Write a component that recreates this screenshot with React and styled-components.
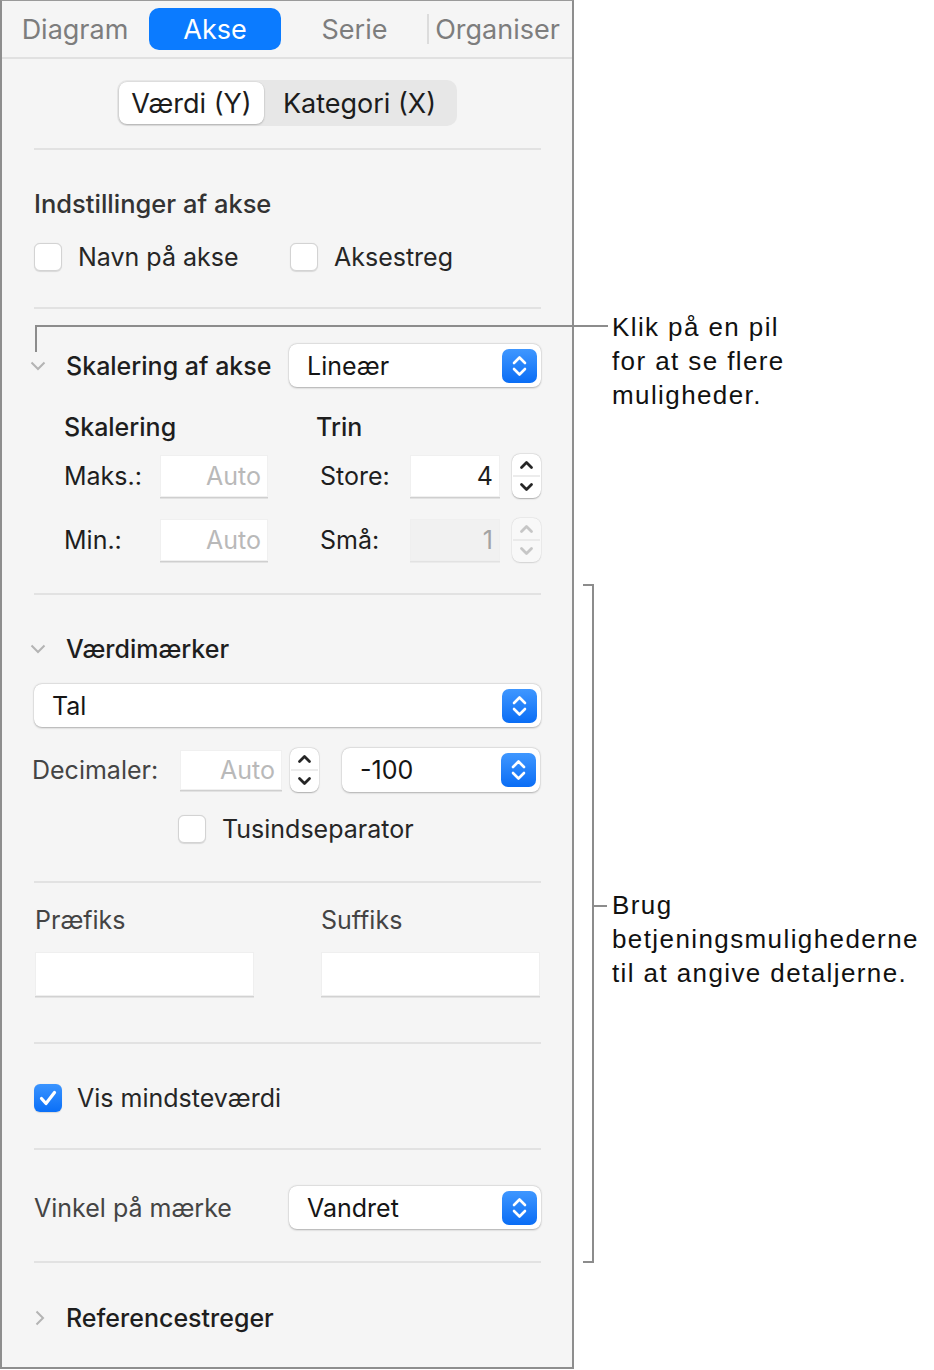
import React from "react";
import styled, { createGlobalStyle } from "styled-components";

const GlobalStyle = createGlobalStyle`
    html, body {
        margin: 0;
        padding: 0;
        background: #fff;
    }
    body {
        font-family: Inter, "Noto Sans", sans-serif;
        -webkit-font-smoothing: antialiased;
    }
    * {
        box-sizing: border-box;
    }
`;

function UpDown({ color = "#fff", w = 35, h = 34 }) {
    const cx = w / 2;
    const cy = h / 2;
    return (
        <svg width={w} height={h} viewBox={`0 0 ${w} ${h}`}>
            <path
                d={`M${cx - 5.5} ${cy - 3} L${cx} ${cy - 8.5} L${cx + 5.5} ${cy - 3}`}
                stroke={color}
                strokeWidth="2.6"
                fill="none"
                strokeLinecap="round"
                strokeLinejoin="round"
            />
            <path
                d={`M${cx - 5.5} ${cy + 3} L${cx} ${cy + 8.5} L${cx + 5.5} ${cy + 3}`}
                stroke={color}
                strokeWidth="2.6"
                fill="none"
                strokeLinecap="round"
                strokeLinejoin="round"
            />
        </svg>
    );
}

function Popup({ label, width }) {
    return (
        <PopupBox $w={width}>
            <PopupText>{label}</PopupText>
            <BlueButton>
                <UpDown />
            </BlueButton>
        </PopupBox>
    );
}

function Stepper({ disabled }) {
    const c = disabled ? "#c6c6c6" : "#262626";
    return (
        <StepperBox $disabled={disabled}>
            <svg width="29" height="44" viewBox="0 0 29 44">
                <path
                    d="M9.5 13.5 L14.5 8.5 L19.5 13.5"
                    stroke={c}
                    strokeWidth="2.8"
                    fill="none"
                    strokeLinecap="round"
                    strokeLinejoin="round"
                />
                <line x1="1" y1="22" x2="28" y2="22" stroke="#e6e6e6" strokeWidth="1.5" />
                <path
                    d="M9.5 30.5 L14.5 35.5 L19.5 30.5"
                    stroke={c}
                    strokeWidth="2.8"
                    fill="none"
                    strokeLinecap="round"
                    strokeLinejoin="round"
                />
            </svg>
        </StepperBox>
    );
}

function Check({ checked }) {
    return (
        <CheckBox $checked={checked}>
            {checked && (
                <svg width="28" height="28" viewBox="0 0 28 28">
                    <path
                        d="M7.5 14.5 L12 19.5 L20.5 8.5"
                        stroke="#fff"
                        strokeWidth="3.2"
                        fill="none"
                        strokeLinecap="round"
                        strokeLinejoin="round"
                    />
                </svg>
            )}
        </CheckBox>
    );
}

function Disclosure({ open }) {
    return (
        <Chevron $open={open}>
            {open ? (
                <svg width="16" height="10" viewBox="0 0 16 10">
                    <path d="M1.5 1.5 L8 8 L14.5 1.5" stroke="#b4b4b4" strokeWidth="2" fill="none" />
                </svg>
            ) : (
                <svg width="10" height="16" viewBox="0 0 10 16">
                    <path d="M1.5 1.5 L8 8 L1.5 14.5" stroke="#b4b4b4" strokeWidth="2" fill="none" />
                </svg>
            )}
        </Chevron>
    );
}

export default function App() {
    return (
        <>
            <GlobalStyle />
            <Page>
                <Panel>
                    <TabBar>
                        <Tab $w={134}>Diagram</Tab>
                        <Tab $w={132} $active>
                            Akse
                        </Tab>
                        <Tab $w={133}>Serie</Tab>
                        <TabDivider />
                        <Tab $w={137}>Organiser</Tab>
                    </TabBar>

                    <Segmented>
                        <Segment $active>Værdi (Y)</Segment>
                        <Segment>Kategori (X)</Segment>
                    </Segmented>

                    <Content>
                        <Divider $mt={22} />

                        <GroupTitle $mt={39}>Indstillinger af akse</GroupTitle>
                        <CheckRow $mt={23}>
                            <CheckItem $w={256}>
                                <Check />
                                <CheckLabel>Navn på akse</CheckLabel>
                            </CheckItem>
                            <CheckItem>
                                <Check />
                                <CheckLabel>Aksestreg</CheckLabel>
                            </CheckItem>
                        </CheckRow>

                        <Divider $mt={36} />

                        <HeadRow $mt={35}>
                            <HeadLeft>
                                <Disclosure open />
                                <HeadText>Skalering af akse</HeadText>
                            </HeadLeft>
                            <Popup label="Lineær" width={252} />
                        </HeadRow>

                        <ScaleGrid $mt={25}>
                            <SubTitle>Skalering</SubTitle>
                            <span />
                            <SubTitle>Trin</SubTitle>
                            <span />
                            <span />

                            <FieldLabel>Maks.:</FieldLabel>
                            <Field>Auto</Field>
                            <FieldLabel>Store:</FieldLabel>
                            <Field $value>4</Field>
                            <Stepper />

                            <FieldLabel>Min.:</FieldLabel>
                            <Field>Auto</Field>
                            <FieldLabel>Små:</FieldLabel>
                            <Field $disabled>1</Field>
                            <Stepper disabled />
                        </ScaleGrid>

                        <Divider $mt={31} />

                        <HeadRow $mt={39} $h={30}>
                            <HeadLeft>
                                <Disclosure open />
                                <HeadText>Værdimærker</HeadText>
                            </HeadLeft>
                        </HeadRow>

                        <Block $mt={20}>
                            <Popup label="Tal" width={507} />
                        </Block>

                        <DecimalRow $mt={21}>
                            <MutedLabel $w={148}>Decimaler:</MutedLabel>
                            <Field $w={102} $h={40}>
                                Auto
                            </Field>
                            <Stepper />
                            <Popup label="-100" width={198} />
                        </DecimalRow>

                        <CheckRow $mt={22} $pl={144}>
                            <CheckItem>
                                <Check />
                                <CheckLabel>Tusindseparator</CheckLabel>
                            </CheckItem>
                        </CheckRow>

                        <Divider $mt={38} />

                        <AffixGrid $mt={22}>
                            <MutedLabel>Præfiks</MutedLabel>
                            <MutedLabel>Suffiks</MutedLabel>
                            <AffixField />
                            <AffixField />
                        </AffixGrid>

                        <Divider $mt={46} />

                        <CheckRow $mt={39}>
                            <CheckItem>
                                <Check checked />
                                <CheckLabel $gap={15}>Vis mindsteværdi</CheckLabel>
                            </CheckItem>
                        </CheckRow>

                        <Divider $mt={36} />

                        <HeadRow $mt={36}>
                            <MutedLabel>Vinkel på mærke</MutedLabel>
                            <Popup label="Vandret" width={252} />
                        </HeadRow>

                        <Divider $mt={32} />

                        <HeadRow $mt={40} $h={30}>
                            <HeadLeft>
                                <Disclosure />
                                <HeadText>Referencestreger</HeadText>
                            </HeadLeft>
                        </HeadRow>
                    </Content>
                </Panel>

                <Notes>
                    <Note $mt={310}>
                        Klik på en pil
                        <br />
                        for at se flere
                        <br />
                        muligheder.
                    </Note>
                    <Note $mt={476}>
                        Brug
                        <br />
                        betjeningsmulighederne
                        <br />
                        til at angive detaljerne.
                    </Note>
                </Notes>

                <Callout />
                <Bracket />
            </Page>
        </>
    );
}

const Page = styled.div`
    position: relative;
    display: flex;
    align-items: flex-start;
    width: 934px;
    height: 1370px;
    overflow: hidden;
`;

const Panel = styled.div`
    width: 574px;
    height: 1369px;
    flex-shrink: 0;
    background: #f5f5f5;
    border: 2px solid #8e8e8e;
    border-top: 1px solid #9a9a9a;
`;

const TabBar = styled.div`
    display: flex;
    align-items: center;
    height: 58px;
    padding-left: 6px;
    gap: 7px;
    border-bottom: 2px solid #e1e1e1;
`;

const Tab = styled.div`
    width: ${(p) => p.$w}px;
    height: 42px;
    display: flex;
    align-items: center;
    justify-content: center;
    border-radius: 10px;
    font-size: 27px;
    color: ${(p) => (p.$active ? "#fff" : "#7d7d7d")};
    background: ${(p) => (p.$active ? "#0b7bff" : "transparent")};
`;

const TabDivider = styled.div`
    width: 2px;
    height: 30px;
    margin-left: -1px;
    margin-right: -7px;
    background: #dcdcdc;
`;

const Segmented = styled.div`
    display: flex;
    width: 340px;
    height: 46px;
    margin: 21px auto 0;
    padding: 2px;
    border-radius: 10px;
    background: #e7e7e7;
`;

const Segment = styled.div`
    display: flex;
    align-items: center;
    justify-content: center;
    flex: ${(p) => (p.$active ? "0 0 145px" : "1")};
    border-radius: 8px;
    font-size: 27px;
    color: #1c1c1c;
    background: ${(p) => (p.$active ? "#fff" : "transparent")};
    box-shadow: ${(p) =>
        p.$active ? "0 1px 2px rgba(0,0,0,0.22), 0 0 0 0.5px rgba(0,0,0,0.06)" : "none"};
`;

const Content = styled.div`
    padding: 0 31px 0 32px;
`;

const Divider = styled.div`
    height: 2px;
    margin-top: ${(p) => p.$mt}px;
    background: #e2e2e2;
`;

const GroupTitle = styled.div`
    margin-top: ${(p) => p.$mt}px;
    font-size: 25.5px;
    line-height: 30px;
    font-weight: 500;
    color: #333;
`;

const CheckRow = styled.div`
    display: flex;
    align-items: center;
    height: 29px;
    margin-top: ${(p) => p.$mt}px;
    padding-left: ${(p) => p.$pl || 0}px;
`;

const CheckItem = styled.div`
    display: flex;
    align-items: center;
    width: ${(p) => (p.$w ? `${p.$w}px` : "auto")};
`;

const CheckBox = styled.div`
    width: 28px;
    height: 28px;
    flex-shrink: 0;
    border-radius: 6px;
    background: ${(p) => (p.$checked ? "linear-gradient(#3a94ff, #0a6ff7)" : "#fff")};
    border: ${(p) => (p.$checked ? "none" : "1px solid #d3d3d3")};
    box-shadow: 0 0.5px 1px rgba(0, 0, 0, 0.12);
`;

const CheckLabel = styled.span`
    margin-left: ${(p) => p.$gap || 16}px;
    font-size: 25px;
    color: #262626;
`;

const HeadRow = styled.div`
    display: flex;
    align-items: center;
    justify-content: space-between;
    height: ${(p) => p.$h || 43}px;
    margin-top: ${(p) => p.$mt}px;
`;

const HeadLeft = styled.div`
    display: flex;
    align-items: center;
`;

const Chevron = styled.span`
    display: flex;
    justify-content: center;
    width: 16px;
    margin-left: ${(p) => (p.$open ? -4 : -2)}px;
    margin-right: ${(p) => (p.$open ? 20 : 18)}px;
`;

const HeadText = styled.span`
    font-size: 25px;
    font-weight: 500;
    color: #1e1e1e;
`;

const PopupBox = styled.div`
    display: flex;
    align-items: center;
    justify-content: space-between;
    width: ${(p) => p.$w}px;
    height: 43px;
    padding: 0 4px 0 18px;
    border-radius: 8px;
    background: #fff;
    box-shadow: 0 0.5px 2px rgba(0, 0, 0, 0.28), 0 0 0 0.5px rgba(0, 0, 0, 0.05);
`;

const PopupText = styled.span`
    font-size: 25px;
    color: #151515;
`;

const BlueButton = styled.div`
    width: 35px;
    height: 34px;
    border-radius: 7px;
    background: linear-gradient(#3f97ff, #0a6df5);
`;

const ScaleGrid = styled.div`
    display: grid;
    grid-template-columns: 96px 108px 142px 90px 41px;
    align-items: center;
    margin-left: 30px;
    margin-top: ${(p) => p.$mt}px;

    & > :nth-child(3) {
        margin-left: 48px;
    }
    & > :nth-child(8),
    & > :nth-child(13) {
        margin-left: 52px;
    }
    & > :nth-child(n + 6) {
        margin-top: 12px;
    }
    & > :nth-child(n + 11) {
        margin-top: 20px;
    }
`;

const SubTitle = styled.div`
    font-size: 25px;
    line-height: 30px;
    font-weight: 500;
    color: #1e1e1e;
`;

const FieldLabel = styled.div`
    font-size: 25px;
    color: #1e1e1e;
`;

const Field = styled.div`
    display: flex;
    align-items: center;
    justify-content: flex-end;
    width: ${(p) => (p.$w ? `${p.$w}px` : "auto")};
    height: ${(p) => p.$h || 42}px;
    padding-right: 7px;
    font-size: 25px;
    color: ${(p) => (p.$value ? "#1e1e1e" : p.$disabled ? "#a3a3a3" : "#b9b9b9")};
    background: ${(p) => (p.$disabled ? "#f1f1f1" : "#fff")};
    box-shadow: inset 0 0 0 1px ${(p) => (p.$disabled ? "#efefef" : "#f0f0f0")},
        0 1.5px 0 ${(p) => (p.$disabled ? "#e2e2e2" : "#cfcfcf")};
`;

const StepperBox = styled.div`
    width: 29px;
    height: 44px;
    margin-left: 12px;
    border-radius: 8px;
    background: ${(p) => (p.$disabled ? "#f8f8f8" : "#fff")};
    box-shadow: 0 0.5px 1.5px rgba(0, 0, 0, ${(p) => (p.$disabled ? 0.12 : 0.28)}),
        0 0 0 0.5px rgba(0, 0, 0, 0.05);
`;

const Block = styled.div`
    margin-top: ${(p) => p.$mt}px;
`;

const DecimalRow = styled.div`
    display: flex;
    align-items: center;
    height: 44px;
    margin-left: -2px;
    margin-top: ${(p) => p.$mt}px;

    & > :nth-child(3) {
        margin-left: 8px;
    }
    & > :nth-child(4) {
        margin-left: 23px;
        height: 44px;
    }
`;

const MutedLabel = styled.div`
    width: ${(p) => (p.$w ? `${p.$w}px` : "auto")};
    flex-shrink: 0;
    font-size: 25px;
    line-height: 30px;
    color: #444;
`;

const AffixGrid = styled.div`
    display: grid;
    grid-template-columns: 219px 219px;
    column-gap: 67px;
    row-gap: 17px;
    margin-top: ${(p) => p.$mt}px;
    padding-left: 1px;
`;

const AffixField = styled.div`
    height: 44px;
    background: #fff;
    box-shadow: inset 0 0 0 1px #efefef, 0 1.5px 0 #d2d2d2;
`;

const Notes = styled.div`
    padding-left: 38px;
`;

const Note = styled.p`
    margin: ${(p) => p.$mt}px 0 0;
    font-family: "Liberation Sans", Arial, sans-serif;
    font-size: 26px;
    line-height: 34px;
    letter-spacing: 1.4px;
    color: #111;
`;

const Callout = styled.div`
    position: absolute;
    left: 35px;
    top: 325px;
    width: 573px;
    height: 27px;
    border-top: 2px solid #8c8c8c;
    border-left: 2px solid #8c8c8c;
`;

const Bracket = styled.div`
    position: absolute;
    left: 583px;
    top: 584px;
    width: 11px;
    height: 679px;
    border: 2px solid #8c8c8c;
    border-left: none;

    &::after {
        content: "";
        position: absolute;
        left: 9px;
        top: 319px;
        width: 15px;
        height: 2px;
        background: #8c8c8c;
    }
`;
